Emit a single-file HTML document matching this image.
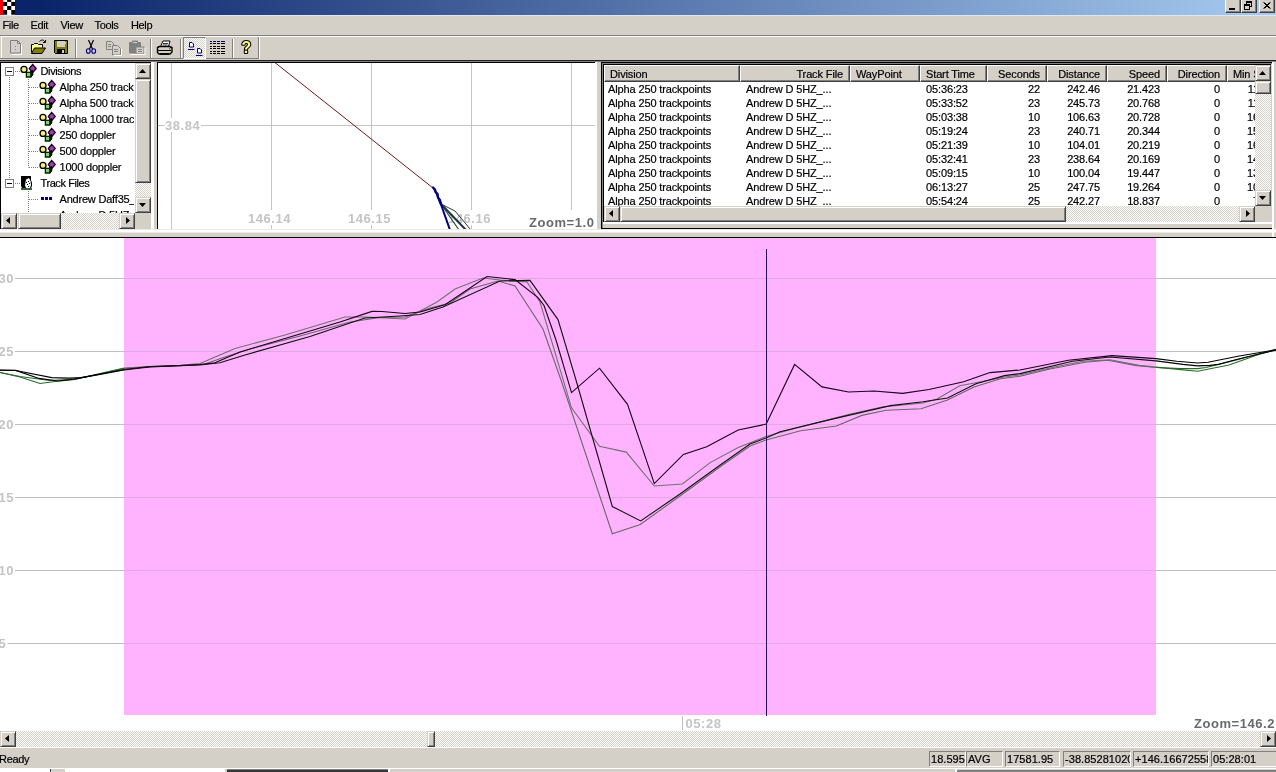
<!DOCTYPE html>
    <html><head><meta charset="utf-8"><title>GPS Results</title>
    <style>
    html,body{margin:0;padding:0;}
    body{width:1276px;height:772px;overflow:hidden;background:#d4d0c8;position:relative;font-family:"Liberation Sans",sans-serif;font-size:11px;color:#000;letter-spacing:-0.13px;line-height:14px;-webkit-text-stroke:0.2px #000;}
    .abs,.abs>*{position:absolute;}
    svg{position:absolute;overflow:hidden;}
    svg text{font-family:"Liberation Sans",sans-serif;}
    #title{left:0;top:0;width:1276px;height:15px;border-bottom:1px solid #e2e6ee;background:linear-gradient(90deg,#0a246a 0%,#0a246a 3%,#a6caf0 100%);}
    .wbtn{top:-2px;width:16px;height:15px;background:#d4d0c8;box-sizing:border-box;border:1px solid;border-color:#fff #404040 #404040 #fff;box-shadow:inset -1px -1px 0 #808080;}
    .scroll{background-color:#e9e7e3;background-image:conic-gradient(#fff 25%,#d4d0c8 0 50%,#fff 0 75%,#d4d0c8 0);background-size:2px 2px;}
    .btn{background:#d4d0c8;box-sizing:border-box;border:1px solid;border-color:#d4d0c8 #404040 #404040 #d4d0c8;box-shadow:inset 1px 1px 0 #fff,inset -1px -1px 0 #808080;}
    .sunk{box-sizing:border-box;border:1px solid;border-color:#808080 #fff #fff #808080;height:16px;top:4px;white-space:nowrap;overflow:hidden;padding:0 0 0 1px;font-size:11px;letter-spacing:0.05px;line-height:14px;}
    .arr{width:0;height:0;border:4px solid transparent;}
    .t{white-space:nowrap;}
    .hd{top:0;height:17px;box-sizing:border-box;background:#d4d0c8;border:1px solid;border-color:#fff #404040 #404040 #fff;box-shadow:inset -1px -1px 0 #808080;white-space:nowrap;overflow:hidden;line-height:13px;}
    .hd span{position:absolute;top:2px;}
    .c{white-space:nowrap;}
    .rr{text-align:right;}
    #w{position:absolute;left:0;top:0;width:1276px;height:772px;overflow:hidden;will-change:transform;}
    </style></head><body><div id="w">
    
<div id="title" class="abs">
<div style="left:0;top:0;width:3px;height:15px;background:#f00000"></div>
<svg style="left:3px;top:0" width="12.400" height="15" viewBox="0 0 12.400 15"><rect width="12.400" height="15" fill="#fff"/>
<rect x="4.13" y="-2.1" width="4.140" height="4" fill="#000"/>
<rect x="0" y="1.9" width="4.140" height="4.1" fill="#000"/>
<rect x="8.26" y="1.9" width="4.140" height="4.1" fill="#000"/>
<rect x="4.13" y="6" width="4.140" height="4" fill="#000"/>
<rect x="0" y="10" width="4.140" height="4.7" fill="#000"/>
<rect x="8.26" y="10" width="4.140" height="4.7" fill="#000"/>
</svg>
<div class="wbtn" style="left:1225px"><div style="position:absolute;left:3px;top:9px;width:6px;height:2px;background:#000"></div></div>
<div class="wbtn" style="left:1241px"><svg style="left:2px;top:2px" width="10" height="10" viewBox="0 0 10 10"><path d="M2 0h6v6h-2v-1h1v-3h-4v1h-1z" fill="#000"/><path d="M0 3h6v6h-6zM1 5v3h4v-3z" fill="#000" fill-rule="evenodd"/></svg></div>
<div class="wbtn" style="left:1259px"><svg style="left:3px;top:3px" width="9" height="8" viewBox="0 0 9 8"><path d="M0.500 0.500l6 6M1.500 0.500l6 6M6.500 0.500l-6 6M7.500 0.500l-6 6" stroke="#000" stroke-width="1" fill="none"/></svg></div>
</div>
<div class="abs" style="left:0;top:16px;width:1276px;height:19px;">
<span class="t" style="left:2.5px;top:2px;letter-spacing:-0.350px">File</span>
<span class="t" style="left:30.5px;top:2px;letter-spacing:-0.350px">Edit</span>
<span class="t" style="left:60.5px;top:2px;letter-spacing:-0.350px">View</span>
<span class="t" style="left:94.5px;top:2px;letter-spacing:-0.350px">Tools</span>
<span class="t" style="left:131px;top:2px;letter-spacing:-0.350px">Help</span>
</div>
<div class="abs" style="left:0;top:35px;width:1276px;height:1px;background:#808080"></div>
<div class="abs" style="left:0;top:36px;width:1276px;height:1px;background:#fff"></div>
<div id="toolbar" class="abs" style="left:0;top:37px;width:1276px;height:23px;">
<div style="left:1px;top:0;width:1px;height:22px;background:#fff"></div>
<div style="left:75px;top:2px;width:1px;height:19px;background:#808080"></div><div style="left:76px;top:2px;width:1px;height:19px;background:#fff"></div>
<div style="left:150px;top:2px;width:1px;height:19px;background:#808080"></div><div style="left:151px;top:2px;width:1px;height:19px;background:#fff"></div>
<div style="left:180px;top:2px;width:1px;height:19px;background:#808080"></div><div style="left:181px;top:2px;width:1px;height:19px;background:#fff"></div>
<div style="left:232px;top:2px;width:1px;height:19px;background:#808080"></div><div style="left:233px;top:2px;width:1px;height:19px;background:#fff"></div>
<div style="left:258px;top:0;width:1px;height:22px;background:#808080"></div><div style="left:259px;top:0;width:1px;height:22px;background:#fff"></div>
<div style="left:0;top:21px;width:259px;height:1px;background:#808080"></div>
<div class="scroll" style="left:183px;top:0px;width:23px;height:22px;box-sizing:border-box;border:1px solid;border-color:#808080 #fff #fff #808080"></div>
<svg style="left:0;top:0" width="260" height="23" viewBox="0 37 260 23">
<path d="M10.5 40.5h7l3 3v9.5h-10z" fill="#d4d0c8" stroke="#808080"/><path d="M17.5 40.5v3h3" fill="none" stroke="#808080"/><path d="M11.5 54.5h10v-10" fill="none" stroke="#fff"/><rect x="15" y="46" width="1" height="1" fill="#808080"/><rect x="15" y="49" width="1" height="1" fill="#808080"/>
<path d="M31.5 52.5v-8h2l1-1h3l1 1h4v3" fill="#ffff99" stroke="#000"/><path d="M31.5 53.5l3-5.5h11l-3.5 5.5z" fill="#808000" stroke="#000"/><path d="M39.5 41.5c2-2 4-2 5.500 0.500m0.500-2v2.500h-2.500" fill="none" stroke="#000"/>
<path d="M54.500 40.500h13v13h-12l-1-1z" fill="#808000" stroke="#000"/><rect x="57" y="41" width="8" height="6" fill="#d4d0c8"/><rect x="57" y="49" width="8" height="4" fill="#000"/><rect x="62" y="50" width="2" height="3" fill="#d4d0c8"/><rect x="65" y="42" width="1" height="2" fill="#d4d0c8"/>
<path d="M88.500 40L92.500 49M93.500 40L89.500 49" stroke="#000" fill="none" stroke-width="1.200"/><ellipse cx="88.300" cy="51" rx="1.900" ry="2.300" fill="none" stroke="#000080" stroke-width="1.100"/><ellipse cx="93.700" cy="51" rx="1.900" ry="2.300" fill="none" stroke="#000080" stroke-width="1.100"/>
<path d="M106.500 41.500h5l2 2v6h-7z" fill="#d4d0c8" stroke="#808080"/><path d="M112.500 45.500h5l3 3v6.500h-8z" fill="#d4d0c8" stroke="#808080"/><path d="M108 44.500h3M108 46.500h3M114 49.500h4M114 51.500h4" stroke="#808080"/><path d="M113.500 55.500h8v-7" stroke="#fff" fill="none"/>
<path d="M129.500 42.500h3v-1.500h5v1.500h3v10.500h-11z" fill="#808080" stroke="#808080"/><rect x="136" y="47" width="8" height="7" fill="#d4d0c8" stroke="#808080"/><path d="M138 49.500h4M138 51.500h4" stroke="#808080"/><rect x="133" y="42" width="4" height="1" fill="#d4d0c8"/><path d="M130.500 54.500h14.500v-7" stroke="#fff" fill="none"/>
<path d="M160.500 46.500l2.500-5.500h7l-1.500 5.500" fill="#fff" stroke="#000"/><path d="M163 43.500h5M162.500 45h5" stroke="#000" stroke-width="0.800"/><path d="M157.500 47.500l2-1h10l2.500 1v4.500l-2 2h-11l-1.500-1.500z" fill="#d4d0c8" stroke="#000" stroke-width="1.400"/><path d="M158 50.500h13" stroke="#000"/><path d="M160 54h9" stroke="#000" stroke-width="1.600"/><rect x="169" y="48" width="1.500" height="1.500" fill="#808000"/>
<path d="M189.500 42.500h2.500l1.500 1.500v3h-4z" fill="#fff" stroke="#000080"/><path d="M188 49.500h6.500" stroke="#000080"/><path d="M197.500 48.500h2.500l1.500 1.500v3h-4z" fill="#fff" stroke="#000080"/><path d="M196 55.500h6.500" stroke="#000080"/>
<path d="M210 41.5h2M213 41.5h3M217 41.5h3M221 41.5h4" stroke="#000080"/>
<path d="M210 43.5h2M213 43.5h3M217 43.5h3M221 43.5h4" stroke="#000"/>
<path d="M210 46.5h2M213 46.5h3M217 46.5h3M221 46.5h4" stroke="#000"/>
<path d="M210 48.5h2M213 48.5h3M217 48.5h3M221 48.5h4" stroke="#000"/>
<path d="M210 51.5h2M213 51.5h3M217 51.5h3M221 51.5h4" stroke="#000"/>
<path d="M210 53.5h2M213 53.5h3M217 53.5h3M221 53.5h4" stroke="#000"/>
<text x="241.500" y="52.500" font-size="16" font-weight="bold" fill="#000" stroke="#000" stroke-width="2.200" stroke-linejoin="round" textLength="9.500" lengthAdjust="spacingAndGlyphs">?</text><text x="241.500" y="52.500" font-size="16" font-weight="bold" fill="#ffff80" textLength="9.500" lengthAdjust="spacingAndGlyphs">?</text>
</svg></div>
<div class="abs" style="left:0;top:60px;width:1276px;height:1px;background:#202020"></div>
<div class="abs" style="left:0;top:61px;width:1276px;height:1px;background:#808080"></div>
<div id="tree" class="abs" style="left:0;top:62px;width:151px;height:167px;background:#fff;box-sizing:border-box;border:0 solid #000;border-width:1px 0 0 1px;overflow:hidden">
<svg style="left:-1px;top:-63px" width="136" height="276" viewBox="0 0 136 276">
<g stroke="#808080" stroke-width="1" stroke-dasharray="1 1" fill="none">
<path d="M9.500 77v102"/><path d="M15 71.500h6"/><path d="M15 183.500h6"/>
<path d="M28.500 79v88.500"/><path d="M28.500 191v22"/>
<path d="M29 87.5h10"/>
<path d="M29 103.5h10"/>
<path d="M29 119.5h10"/>
<path d="M29 135.5h10"/>
<path d="M29 151.5h10"/>
<path d="M29 167.5h10"/>
<path d="M29 199.500h10"/>
</g>
<rect x="5.500" y="67.5" width="8" height="8" fill="#fff" stroke="#808080"/><path d="M7 71.5h5" stroke="#000"/>
<rect x="5.500" y="179.5" width="8" height="8" fill="#fff" stroke="#808080"/><path d="M7 183.5h5" stroke="#000"/>
<path d="M26 71.5l2 2M31.5 71l-1.500 2" stroke="#000" stroke-width="1.600"/><circle cx="24" cy="69.4" r="3" fill="#f4ec7c" stroke="#000" stroke-width="1.300"/><path d="M32.7 64.3l3.500 4.200l-3.500 4.100l-3.400-4.100z" fill="#a23cb0" stroke="#1a001a" stroke-width="1.300" stroke-linejoin="round"/><path d="M30.9 72l1.900-1.500v4.500l-1.900 2z" fill="#000" stroke="#000" stroke-width="1"/><path d="M26.4 72.4h4.400v4.600h-4.400z" fill="#7cdc5c" stroke="#002000" stroke-width="1.300"/>
<path d="M45 87.5l2 2M50.5 87l-1.500 2" stroke="#000" stroke-width="1.600"/><circle cx="43" cy="85.4" r="3" fill="#f4ec7c" stroke="#000" stroke-width="1.300"/><path d="M51.7 80.3l3.500 4.200l-3.500 4.100l-3.400-4.100z" fill="#a23cb0" stroke="#1a001a" stroke-width="1.300" stroke-linejoin="round"/><path d="M49.9 88l1.900-1.500v4.500l-1.900 2z" fill="#000" stroke="#000" stroke-width="1"/><path d="M45.4 88.4h4.400v4.600h-4.400z" fill="#7cdc5c" stroke="#002000" stroke-width="1.300"/>
<path d="M45 103.5l2 2M50.5 103l-1.500 2" stroke="#000" stroke-width="1.600"/><circle cx="43" cy="101.4" r="3" fill="#f4ec7c" stroke="#000" stroke-width="1.300"/><path d="M51.7 96.3l3.500 4.200l-3.500 4.100l-3.400-4.100z" fill="#a23cb0" stroke="#1a001a" stroke-width="1.300" stroke-linejoin="round"/><path d="M49.9 104l1.900-1.500v4.500l-1.900 2z" fill="#000" stroke="#000" stroke-width="1"/><path d="M45.4 104.4h4.400v4.600h-4.400z" fill="#7cdc5c" stroke="#002000" stroke-width="1.300"/>
<path d="M45 119.5l2 2M50.5 119l-1.500 2" stroke="#000" stroke-width="1.600"/><circle cx="43" cy="117.4" r="3" fill="#f4ec7c" stroke="#000" stroke-width="1.300"/><path d="M51.7 112.3l3.500 4.200l-3.500 4.100l-3.400-4.100z" fill="#a23cb0" stroke="#1a001a" stroke-width="1.300" stroke-linejoin="round"/><path d="M49.9 120l1.900-1.500v4.500l-1.900 2z" fill="#000" stroke="#000" stroke-width="1"/><path d="M45.4 120.4h4.400v4.600h-4.400z" fill="#7cdc5c" stroke="#002000" stroke-width="1.300"/>
<path d="M45 135.5l2 2M50.5 135l-1.500 2" stroke="#000" stroke-width="1.600"/><circle cx="43" cy="133.4" r="3" fill="#f4ec7c" stroke="#000" stroke-width="1.300"/><path d="M51.7 128.3l3.500 4.200l-3.500 4.100l-3.400-4.100z" fill="#a23cb0" stroke="#1a001a" stroke-width="1.300" stroke-linejoin="round"/><path d="M49.9 136l1.900-1.500v4.500l-1.900 2z" fill="#000" stroke="#000" stroke-width="1"/><path d="M45.4 136.4h4.400v4.600h-4.400z" fill="#7cdc5c" stroke="#002000" stroke-width="1.300"/>
<path d="M45 151.5l2 2M50.5 151l-1.500 2" stroke="#000" stroke-width="1.600"/><circle cx="43" cy="149.4" r="3" fill="#f4ec7c" stroke="#000" stroke-width="1.300"/><path d="M51.7 144.3l3.500 4.200l-3.500 4.100l-3.400-4.100z" fill="#a23cb0" stroke="#1a001a" stroke-width="1.300" stroke-linejoin="round"/><path d="M49.9 152l1.900-1.500v4.500l-1.900 2z" fill="#000" stroke="#000" stroke-width="1"/><path d="M45.4 152.4h4.400v4.600h-4.400z" fill="#7cdc5c" stroke="#002000" stroke-width="1.300"/>
<path d="M45 167.5l2 2M50.5 167l-1.500 2" stroke="#000" stroke-width="1.600"/><circle cx="43" cy="165.4" r="3" fill="#f4ec7c" stroke="#000" stroke-width="1.300"/><path d="M51.7 160.3l3.500 4.200l-3.500 4.100l-3.400-4.100z" fill="#a23cb0" stroke="#1a001a" stroke-width="1.300" stroke-linejoin="round"/><path d="M49.9 168l1.900-1.500v4.500l-1.900 2z" fill="#000" stroke="#000" stroke-width="1"/><path d="M45.4 168.4h4.400v4.600h-4.400z" fill="#7cdc5c" stroke="#002000" stroke-width="1.300"/>
<path d="M21 176H31V180L32 183V186L31 188H22L21 186Z" fill="#000"/><path d="M26 179.500L29 178L30.500 181L31 185L30 188H26L25 185Z" fill="#fff"/><path d="M28 181h1v1h-1zM29 183h1v1h-1zM27 184h1v1h-1zM28 186h1v1h-1zM26 182h1v1h-1z" fill="#000"/><path d="M21 189H32" stroke="#0a3a0a" stroke-width="1.600"/>
<rect x="41" y="197" width="3" height="3" fill="#000080"/>
<rect x="45" y="197" width="3" height="3" fill="#000080"/>
<rect x="49" y="197" width="3" height="3" fill="#000080"/>
</svg>
<div class="abs" style="left:0;top:0;width:133px;height:150px;overflow:hidden;font-size:11px;letter-spacing:-0.050px">
<span class="t" style="left:39.5px;top:1px;letter-spacing:-0.38px">Divisions</span>
<span class="t" style="left:58.5px;top:17px;letter-spacing:-0.15px">Alpha 250 trackpoints</span>
<span class="t" style="left:58.5px;top:33px;letter-spacing:-0.15px">Alpha 500 trackpoints</span>
<span class="t" style="left:58.5px;top:49px;letter-spacing:-0.15px">Alpha 1000 trackpoints</span>
<span class="t" style="left:58.5px;top:65px;letter-spacing:-0.2px">250 doppler</span>
<span class="t" style="left:58.5px;top:81px;letter-spacing:-0.2px">500 doppler</span>
<span class="t" style="left:58.5px;top:97px;letter-spacing:-0.2px">1000 doppler</span>
<span class="t" style="left:39.5px;top:113px;letter-spacing:-0.41px">Track Files</span>
<span class="t" style="left:58.5px;top:129px;letter-spacing:-0.2px">Andrew Daff35_</span>
<span class="t" style="left:58.5px;top:145px;letter-spacing:-0.2px">Andrew D 5HZ_</span>
</div>
<div class="scroll" style="left:134px;top:0;width:16px;height:150px"></div>
<div class="btn" style="left:134px;top:0;width:16px;height:16px"></div><svg style="left:138px;top:6px" width="7" height="4"><path d="M0 4L3.500 0L7 4z" fill="#000"/></svg>
<div class="btn" style="left:134px;top:16px;width:16px;height:104px"></div>
<div class="btn" style="left:134px;top:134px;width:16px;height:16px"></div><svg style="left:138px;top:140px" width="7" height="4"><path d="M0 0L3.500 4L7 0z" fill="#000"/></svg>
<div class="scroll" style="left:0;top:150px;width:134px;height:16px"></div>
<div class="btn" style="left:0;top:150px;width:16px;height:16px"></div><svg style="left:5px;top:154px" width="4" height="7"><path d="M4 0L0 3.500L4 7z" fill="#000"/></svg>
<div class="btn" style="left:17px;top:150px;width:43px;height:16px"></div>
<div class="btn" style="left:118px;top:150px;width:16px;height:16px"></div><svg style="left:125px;top:154px" width="4" height="7"><path d="M0 0L4 3.500L0 7z" fill="#000"/></svg>
<div style="left:134px;top:150px;width:16px;height:16px;background:#d4d0c8"></div>
</div>
<div class="abs" style="left:151px;top:62px;width:3px;height:168px;background:#fff"></div>
<div id="map" class="abs" style="left:157px;top:62px;width:438px;height:167px;background:#fff;box-sizing:border-box;border:0 solid #000;border-width:1px 0 0 1px;overflow:hidden">
<svg style="left:-1px;top:-1px" width="438" height="167" viewBox="157 62 438 167">
<g stroke="#c4c4c4" stroke-width="1" fill="none">
<path d="M171.5 60V230"/>
<path d="M271.5 60V230"/>
<path d="M371.5 60V230"/>
<path d="M471.5 60V230"/>
<path d="M571.5 60V230"/>
<path d="M156 125.500H597"/>
</g>
<g fill="#fff"><rect x="165" y="118" width="36" height="14"/>
<rect x="247.5" y="210" width="46" height="15"/>
<rect x="347.5" y="210" width="46" height="15"/>
<rect x="447.5" y="210" width="46" height="15"/>
<rect x="528" y="210" width="68" height="20"/>
</g>
<g font-weight="bold" font-size="13" fill="#c4c4c4" letter-spacing="0.550">
<text x="165" y="130">38.84</text>
<text x="248.0" y="223">146.14</text>
<text x="348.0" y="223">146.15</text>
<text x="448.0" y="223">146.16</text>
</g>
<path d="M273 61L433 188" stroke="#701818" stroke-width="1" fill="none"/>
<path d="M441 204L455 211L471 230" stroke="#304030" stroke-width="1" fill="none"/>
<path d="M441 204L459 230" stroke="#2a5a3a" stroke-width="1.200" fill="none"/>
<path d="M441 204L466 230" stroke="#203040" stroke-width="2" fill="none"/>
<path d="M433.500 188L436.500 193L439 200L441 204.500L450 230" stroke="#000080" stroke-width="2" fill="none" stroke-linejoin="round"/>
<path d="M433 187.500L435 189.500L435.500 192L437.500 194L438 197.500L440 200L441 204" stroke="#000080" stroke-width="2.300" fill="none" stroke-linecap="round"/>
<text x="529" y="227" fill="#6a6a6a" font-weight="bold" font-size="13" letter-spacing="0.550">Zoom=1.0</text>
</svg></div>
<div class="abs" style="left:595px;top:62px;width:2px;height:168px;background:#fff"></div>
<div id="list" class="abs" style="left:601px;top:62px;width:673px;height:167px;background:#d4d0c8;overflow:hidden">
<div style="left:0;top:0;width:671px;height:1px;background:#000"></div><div style="left:0;top:0;width:1px;height:167px;background:#000"></div><div style="left:0;top:166px;width:671px;height:1px;background:#000"></div>
<div style="left:1px;top:1px;width:670px;height:1px;background:#808080"></div><div style="left:1px;top:1px;width:1px;height:165px;background:#808080"></div>
<div style="left:671px;top:0;width:2px;height:167px;background:#fff"></div>
<div style="left:2px;top:160px;width:671px;height:2px;background:#fff"></div>
<div style="left:2px;top:2px;width:668px;height:158px;background:#fff;box-sizing:border-box;border:0 solid #000;border-width:1px 0 0 1px;overflow:hidden" class="abs">
<div style="left:0;top:0;width:651px;height:17px;overflow:hidden" class="abs">
<div class="hd" style="left:0px;width:136px"><span style="left:5px">Division</span></div>
<div class="hd" style="left:136px;width:110px"><span style="right:6px">Track File</span></div>
<div class="hd" style="left:246px;width:70px"><span style="left:5px">WayPoint</span></div>
<div class="hd" style="left:316px;width:67px"><span style="left:5px">Start Time</span></div>
<div class="hd" style="left:383px;width:60px"><span style="right:6px">Seconds</span></div>
<div class="hd" style="left:443px;width:60px"><span style="right:6px">Distance</span></div>
<div class="hd" style="left:503px;width:60px"><span style="right:6px">Speed</span></div>
<div class="hd" style="left:563px;width:60px"><span style="right:6px">Direction</span></div>
<div class="hd" style="left:623px;width:63px"><span style="left:5px">Min Spd</span></div>
</div>
<div style="left:0;top:17px;width:651px;height:124px;overflow:hidden" class="abs">
<span class="c" style="left:4px;top:0px">Alpha 250 trackpoints</span>
<span class="c" style="left:142px;top:0px">Andrew D 5HZ_...</span>
<span class="c" style="left:322px;top:0px">05:36:23</span>
<span class="c rr" style="left:383px;width:53px;top:0px">22</span>
<span class="c rr" style="left:443px;width:53px;top:0px">242.46</span>
<span class="c rr" style="left:503px;width:53px;top:0px">21.423</span>
<span class="c rr" style="left:563px;width:53px;top:0px">0</span>
<span class="c rr" style="left:623px;width:32px;top:0px">11</span>
<span class="c" style="left:4px;top:14px">Alpha 250 trackpoints</span>
<span class="c" style="left:142px;top:14px">Andrew D 5HZ_...</span>
<span class="c" style="left:322px;top:14px">05:33:52</span>
<span class="c rr" style="left:383px;width:53px;top:14px">23</span>
<span class="c rr" style="left:443px;width:53px;top:14px">245.73</span>
<span class="c rr" style="left:503px;width:53px;top:14px">20.768</span>
<span class="c rr" style="left:563px;width:53px;top:14px">0</span>
<span class="c rr" style="left:623px;width:32px;top:14px">11</span>
<span class="c" style="left:4px;top:28px">Alpha 250 trackpoints</span>
<span class="c" style="left:142px;top:28px">Andrew D 5HZ_...</span>
<span class="c" style="left:322px;top:28px">05:03:38</span>
<span class="c rr" style="left:383px;width:53px;top:28px">10</span>
<span class="c rr" style="left:443px;width:53px;top:28px">106.63</span>
<span class="c rr" style="left:503px;width:53px;top:28px">20.728</span>
<span class="c rr" style="left:563px;width:53px;top:28px">0</span>
<span class="c rr" style="left:623px;width:32px;top:28px">16</span>
<span class="c" style="left:4px;top:42px">Alpha 250 trackpoints</span>
<span class="c" style="left:142px;top:42px">Andrew D 5HZ_...</span>
<span class="c" style="left:322px;top:42px">05:19:24</span>
<span class="c rr" style="left:383px;width:53px;top:42px">23</span>
<span class="c rr" style="left:443px;width:53px;top:42px">240.71</span>
<span class="c rr" style="left:503px;width:53px;top:42px">20.344</span>
<span class="c rr" style="left:563px;width:53px;top:42px">0</span>
<span class="c rr" style="left:623px;width:32px;top:42px">15</span>
<span class="c" style="left:4px;top:56px">Alpha 250 trackpoints</span>
<span class="c" style="left:142px;top:56px">Andrew D 5HZ_...</span>
<span class="c" style="left:322px;top:56px">05:21:39</span>
<span class="c rr" style="left:383px;width:53px;top:56px">10</span>
<span class="c rr" style="left:443px;width:53px;top:56px">104.01</span>
<span class="c rr" style="left:503px;width:53px;top:56px">20.219</span>
<span class="c rr" style="left:563px;width:53px;top:56px">0</span>
<span class="c rr" style="left:623px;width:32px;top:56px">16</span>
<span class="c" style="left:4px;top:70px">Alpha 250 trackpoints</span>
<span class="c" style="left:142px;top:70px">Andrew D 5HZ_...</span>
<span class="c" style="left:322px;top:70px">05:32:41</span>
<span class="c rr" style="left:383px;width:53px;top:70px">23</span>
<span class="c rr" style="left:443px;width:53px;top:70px">238.64</span>
<span class="c rr" style="left:503px;width:53px;top:70px">20.169</span>
<span class="c rr" style="left:563px;width:53px;top:70px">0</span>
<span class="c rr" style="left:623px;width:32px;top:70px">14</span>
<span class="c" style="left:4px;top:84px">Alpha 250 trackpoints</span>
<span class="c" style="left:142px;top:84px">Andrew D 5HZ_...</span>
<span class="c" style="left:322px;top:84px">05:09:15</span>
<span class="c rr" style="left:383px;width:53px;top:84px">10</span>
<span class="c rr" style="left:443px;width:53px;top:84px">100.04</span>
<span class="c rr" style="left:503px;width:53px;top:84px">19.447</span>
<span class="c rr" style="left:563px;width:53px;top:84px">0</span>
<span class="c rr" style="left:623px;width:32px;top:84px">13</span>
<span class="c" style="left:4px;top:98px">Alpha 250 trackpoints</span>
<span class="c" style="left:142px;top:98px">Andrew D 5HZ_...</span>
<span class="c" style="left:322px;top:98px">06:13:27</span>
<span class="c rr" style="left:383px;width:53px;top:98px">25</span>
<span class="c rr" style="left:443px;width:53px;top:98px">247.75</span>
<span class="c rr" style="left:503px;width:53px;top:98px">19.264</span>
<span class="c rr" style="left:563px;width:53px;top:98px">0</span>
<span class="c rr" style="left:623px;width:32px;top:98px">10</span>
<span class="c" style="left:4px;top:112px">Alpha 250 trackpoints</span>
<span class="c" style="left:142px;top:112px">Andrew D 5HZ_...</span>
<span class="c" style="left:322px;top:112px">05:54:24</span>
<span class="c rr" style="left:383px;width:53px;top:112px">25</span>
<span class="c rr" style="left:443px;width:53px;top:112px">242.27</span>
<span class="c rr" style="left:503px;width:53px;top:112px">18.837</span>
<span class="c rr" style="left:563px;width:53px;top:112px">0</span>
<span class="c rr" style="left:623px;width:32px;top:112px">7</span>
</div>
<div class="scroll" style="left:651px;top:0;width:16px;height:141px"></div>
<div class="btn" style="left:651px;top:0;width:16px;height:16px"></div><svg style="left:655px;top:6px" width="7" height="4"><path d="M0 4L3.500 0L7 4z" fill="#000"/></svg>
<div class="btn" style="left:651px;top:16px;width:16px;height:13px"></div>
<div class="btn" style="left:651px;top:125px;width:16px;height:16px"></div><svg style="left:655px;top:131px" width="7" height="4"><path d="M0 0L3.500 4L7 0z" fill="#000"/></svg>
<div class="scroll" style="left:0;top:141px;width:651px;height:16px"></div>
<div class="btn" style="left:0;top:141px;width:16px;height:16px"></div><svg style="left:5px;top:145px" width="4" height="7"><path d="M4 0L0 3.500L4 7z" fill="#000"/></svg>
<div class="btn" style="left:16px;top:141px;width:446px;height:16px"></div>
<div class="btn" style="left:635px;top:141px;width:16px;height:16px"></div><svg style="left:642px;top:145px" width="4" height="7"><path d="M0 0L4 3.500L0 7z" fill="#000"/></svg>
<div style="left:651px;top:141px;width:16px;height:16px;background:#d4d0c8"></div>
</div>
</div>
<div class="abs" style="left:0;top:229px;width:1276px;height:1px;background:#eceae5"></div>
<div class="abs" style="left:0;top:230px;width:1276px;height:2px;background:#fff"></div>
<div class="abs" style="left:0;top:232px;width:1276px;height:1px;background:#eceae5"></div>
<div class="abs" style="left:1272px;top:229px;width:2px;height:8px;background:#fff"></div>
<div id="chart" class="abs" style="left:0;top:237px;width:1276px;height:494px;background:#fff;overflow:hidden">
<svg style="left:0;top:0" width="1276" height="494" viewBox="0 237 1276 494">
<rect x="0" y="237" width="1276" height="1" fill="#000"/>
<rect x="124" y="238" width="1032" height="477" fill="#ffb3ff"/>
<g stroke="#c0c0c0" stroke-width="1">
<path d="M0 278.5H124M1156 278.5H1276"/>
<path d="M0 351.5H124M1156 351.5H1276"/>
<path d="M0 424.5H124M1156 424.5H1276"/>
<path d="M0 497.5H124M1156 497.5H1276"/>
<path d="M0 570.5H124M1156 570.5H1276"/>
<path d="M0 643.5H124M1156 643.5H1276"/>
</g><g stroke="#e0a8e0" stroke-width="1">
<path d="M124 278.5H1156"/>
<path d="M124 351.5H1156"/>
<path d="M124 424.5H1156"/>
<path d="M124 497.5H1156"/>
<path d="M124 570.5H1156"/>
<path d="M124 643.5H1156"/>
</g>
<g fill="#fff">
<rect x="0" y="272" width="15" height="13"/>
<rect x="0" y="345" width="15" height="13"/>
<rect x="0" y="418" width="15" height="13"/>
<rect x="0" y="491" width="15" height="13"/>
<rect x="0" y="564" width="15" height="13"/>
<rect x="0" y="637" width="7.5" height="13"/>
<rect x="683" y="716" width="40" height="14"/>
</g>
<g font-weight="bold" font-size="13" fill="#c4c4c4" letter-spacing="0.550">
<text x="-1.5" y="283">30</text>
<text x="-1.5" y="356">25</text>
<text x="-1.5" y="429">20</text>
<text x="-1.5" y="502">15</text>
<text x="-1.5" y="575">10</text>
<text x="-1.5" y="648">5</text>
<path d="M682.500 716V730" stroke="#c0c0c0"/>
<text x="685.500" y="728">05:28</text>
<text x="1194" y="728" fill="#6a6a6a">Zoom=146.2</text>
</g>
<defs><clipPath id="cpink"><rect x="124" y="238" width="1032" height="477"/></clipPath><clipPath id="cwl"><rect x="0" y="238" width="124" height="477"/></clipPath><clipPath id="cwr"><rect x="1156" y="238" width="120" height="477"/></clipPath></defs>
<polyline points="0,372.5 20,377 40,383.5 55,381.5 75,379.5 100,373.5 124,368 150,366.5 180,365.4 200,363.5 235,348.4 285,335 345,317 365,317 405,319 437,302 455,289 483,278 500,280 527,282 540,302 571.5,407.8 599.5,446.3 626.3,452.1 654.3,486 682.3,484 710.2,462.6 738.2,447.5 766,436.5 800,427 849.6,414.4 882,407 923,403 937,399 959.7,385.8 976,382.8 1004.5,377 1020,375 1050,368 1083,361.3 1110,359.8 1139,365.4 1181,369.6 1197.6,371.3 1229,365 1260,354 1276,349.8" fill="none" stroke="#707070" stroke-width="1.100" clip-path="url(#cpink)"/>
<polyline points="0,372.5 20,377 40,383.5 55,381.5 75,379.5 100,373.5 124,368 150,366.5 180,365.4 200,363.5 235,348.4 285,335 345,317 365,317 405,319 437,302 455,289 483,278 500,280 527,282 540,302 571.5,407.8 599.5,446.3 626.3,452.1 654.3,486 682.3,484 710.2,462.6 738.2,447.5 766,436.5 800,427 849.6,414.4 882,407 923,403 937,399 959.7,385.8 976,382.8 1004.5,377 1020,375 1050,368 1083,361.3 1110,359.8 1139,365.4 1181,369.6 1197.6,371.3 1229,365 1260,354 1276,349.8" fill="none" stroke="#2a6a2a" stroke-width="1.100" clip-path="url(#cwl)"/>
<polyline points="0,372.5 20,377 40,383.5 55,381.5 75,379.5 100,373.5 124,368 150,366.5 180,365.4 200,363.5 235,348.4 285,335 345,317 365,317 405,319 437,302 455,289 483,278 500,280 527,282 540,302 571.5,407.8 599.5,446.3 626.3,452.1 654.3,486 682.3,484 710.2,462.6 738.2,447.5 766,436.5 800,427 849.6,414.4 882,407 923,403 937,399 959.7,385.8 976,382.8 1004.5,377 1020,375 1050,368 1083,361.3 1110,359.8 1139,365.4 1181,369.6 1197.6,371.3 1229,365 1260,354 1276,349.8" fill="none" stroke="#2a6a2a" stroke-width="1.100" clip-path="url(#cwr)"/>
<polyline points="0,372.5 20,376.5 50,380.5 75,379 100,374 124,368.5 150,366.8 180,365.6 205,364 225,357 250,349 300,336 350,322 380,317.5 405,317 430,308 450,303 470,289 498,281 515,286 543,329 561,380 612.3,533.7 640.3,524.4 680,496 722,465.5 750,446 766,440 800.7,430.7 836.4,426 861.9,415.4 886.3,410.3 921,408.7 947.5,400 974,386.9 1000.4,378.7 1020,376.3 1050,369 1085,362.3 1108,360.2 1135,365.4 1156,367.5 1181,368.6 1197.6,368.6 1206,367.5 1239.3,359.2 1276,349.2" fill="none" stroke="#686868" stroke-width="1.100" clip-path="url(#cpink)"/>
<polyline points="0,372.5 20,376.5 50,380.5 75,379 100,374 124,368.5 150,366.8 180,365.6 205,364 225,357 250,349 300,336 350,322 380,317.5 405,317 430,308 450,303 470,289 498,281 515,286 543,329 561,380 612.3,533.7 640.3,524.4 680,496 722,465.5 750,446 766,440 800.7,430.7 836.4,426 861.9,415.4 886.3,410.3 921,408.7 947.5,400 974,386.9 1000.4,378.7 1020,376.3 1050,369 1085,362.3 1108,360.2 1135,365.4 1156,367.5 1181,368.6 1197.6,368.6 1206,367.5 1239.3,359.2 1276,349.2" fill="none" stroke="#2a6a2a" stroke-width="1.100" clip-path="url(#cwl)"/>
<polyline points="0,372.5 20,376.5 50,380.5 75,379 100,374 124,368.5 150,366.8 180,365.6 205,364 225,357 250,349 300,336 350,322 380,317.5 405,317 430,308 450,303 470,289 498,281 515,286 543,329 561,380 612.3,533.7 640.3,524.4 680,496 722,465.5 750,446 766,440 800.7,430.7 836.4,426 861.9,415.4 886.3,410.3 921,408.7 947.5,400 974,386.9 1000.4,378.7 1020,376.3 1050,369 1085,362.3 1108,360.2 1135,365.4 1156,367.5 1181,368.6 1197.6,368.6 1206,367.5 1239.3,359.2 1276,349.2" fill="none" stroke="#2a6a2a" stroke-width="1.100" clip-path="url(#cwr)"/>
<polyline points="0,370.2 15.7,370.5 51.7,377.6 69,378.1 81.5,377.6 100,374.5 124,370 150,367 180,365.8 200,365 220,362.7 245,355 310,336.5 350,323 365,318 400,316 420,314.5 443,307 500,281 530,280.4 558,319.6 576,380 612.3,506.5 640.7,520.9 680,494 722,463.8 750,444 766,438 780,431.7 835.4,418.4 890.4,405.6 923,401.7 947.5,398 976,383.8 1004.5,375.6 1020,373.6 1072.5,361.3 1110,357 1156,360.9 1183,364.4 1197.6,365.9 1210,365.4 1218.5,364.4 1239.3,358.8 1276,350" fill="none" stroke="#101010" stroke-width="1.100" clip-path="url(#cpink)"/>
<polyline points="0,370.2 15.7,370.5 51.7,377.6 69,378.1 81.5,377.6 100,374.5 124,370 150,367 180,365.8 200,365 220,362.7 245,355 310,336.5 350,323 365,318 400,316 420,314.5 443,307 500,281 530,280.4 558,319.6 576,380 612.3,506.5 640.7,520.9 680,494 722,463.8 750,444 766,438 780,431.7 835.4,418.4 890.4,405.6 923,401.7 947.5,398 976,383.8 1004.5,375.6 1020,373.6 1072.5,361.3 1110,357 1156,360.9 1183,364.4 1197.6,365.9 1210,365.4 1218.5,364.4 1239.3,358.8 1276,350" fill="none" stroke="#000" stroke-width="1.100" clip-path="url(#cwl)"/>
<polyline points="0,370.2 15.7,370.5 51.7,377.6 69,378.1 81.5,377.6 100,374.5 124,370 150,367 180,365.8 200,365 220,362.7 245,355 310,336.5 350,323 365,318 400,316 420,314.5 443,307 500,281 530,280.4 558,319.6 576,380 612.3,506.5 640.7,520.9 680,494 722,463.8 750,444 766,438 780,431.7 835.4,418.4 890.4,405.6 923,401.7 947.5,398 976,383.8 1004.5,375.6 1020,373.6 1072.5,361.3 1110,357 1156,360.9 1183,364.4 1197.6,365.9 1210,365.4 1218.5,364.4 1239.3,358.8 1276,350" fill="none" stroke="#000" stroke-width="1.100" clip-path="url(#cwr)"/>
<polyline points="0,370 15.7,370.4 39,378.4 58,381 73.7,379.2 81.5,377.6 100,374 124,369.5 150,366.5 180,365.5 200,364.5 215,362.7 240,352 270,343 300,334 340,322 372,311.4 382,311.5 405,313.5 420,312 445,304.7 487,276.5 515,279.6 538,297.6 544,305.5 556,340 571.5,392.6 599.5,368.2 627.5,404.3 654.3,483.6 683.4,454.4 706.7,446.8 738.2,430 766.2,424.1 794.6,364.4 822,386.9 848.6,392 874,391 902.6,393.4 929,389.5 963.7,381.8 990,372.6 1020,370 1068.4,360.2 1112,355.6 1156,358.6 1176.8,361.3 1197.6,363 1208,362.3 1239.3,356 1276,349.8" fill="none" stroke="#180018" stroke-width="1.100" clip-path="url(#cpink)"/>
<polyline points="0,370 15.7,370.4 39,378.4 58,381 73.7,379.2 81.5,377.6 100,374 124,369.5 150,366.5 180,365.5 200,364.5 215,362.7 240,352 270,343 300,334 340,322 372,311.4 382,311.5 405,313.5 420,312 445,304.7 487,276.5 515,279.6 538,297.6 544,305.5 556,340 571.5,392.6 599.5,368.2 627.5,404.3 654.3,483.6 683.4,454.4 706.7,446.8 738.2,430 766.2,424.1 794.6,364.4 822,386.9 848.6,392 874,391 902.6,393.4 929,389.5 963.7,381.8 990,372.6 1020,370 1068.4,360.2 1112,355.6 1156,358.6 1176.8,361.3 1197.6,363 1208,362.3 1239.3,356 1276,349.8" fill="none" stroke="#000" stroke-width="1.100" clip-path="url(#cwl)"/>
<polyline points="0,370 15.7,370.4 39,378.4 58,381 73.7,379.2 81.5,377.6 100,374 124,369.5 150,366.5 180,365.5 200,364.5 215,362.7 240,352 270,343 300,334 340,322 372,311.4 382,311.5 405,313.5 420,312 445,304.7 487,276.5 515,279.6 538,297.6 544,305.5 556,340 571.5,392.6 599.5,368.2 627.5,404.3 654.3,483.6 683.4,454.4 706.7,446.8 738.2,430 766.2,424.1 794.6,364.4 822,386.9 848.6,392 874,391 902.6,393.4 929,389.5 963.7,381.8 990,372.6 1020,370 1068.4,360.2 1112,355.6 1156,358.6 1176.8,361.3 1197.6,363 1208,362.3 1239.3,356 1276,349.8" fill="none" stroke="#000" stroke-width="1.100" clip-path="url(#cwr)"/>
<path d="M766.500 249V716" stroke="#2a1060" stroke-width="1"/>
</svg></div>
<div id="hscroll" class="abs scroll" style="left:0;top:731px;width:1276px;height:16px;">
<div class="btn" style="left:0;top:0;width:16px;height:16px"></div><svg style="left:5px;top:4px" width="4" height="7"><path d="M4 0L0 3.500L4 7z" fill="#000"/></svg>
<div class="btn" style="left:427px;top:0;width:8px;height:16px"></div>
<div class="btn" style="left:1260px;top:0;width:16px;height:16px"></div><svg style="left:1267px;top:4px" width="4" height="7"><path d="M0 0L4 3.500L0 7z" fill="#000"/></svg>
</div>
<div id="status" class="abs" style="left:0;top:747px;width:1276px;height:25px;background:#d4d0c8">
<div style="left:0;top:0;width:1276px;height:1px;background:#fff"></div>
<span class="t" style="left:-1px;top:5px;font-size:11px;letter-spacing:-0.300px">Ready</span>
<div class="sunk" style="left:929px;width:37px">18.595</div>
<div class="sunk" style="left:966px;width:37px">AVG</div>
<div class="sunk" style="left:1005px;width:55px">17581.95</div>
<div class="sunk" style="left:1063px;width:68px">-38.85281020</div>
<div class="sunk" style="left:1133px;width:76px">+146.16672558</div>
<div class="sunk" style="left:1211px;width:66px">05:28:01</div>
<div style="left:0;top:21px;width:1276px;height:1px;background:#fff"></div>
<div style="left:0;top:22px;width:50px;height:3px;background:#fff"></div>
<div style="left:50px;top:22px;width:1px;height:3px;background:#404040"></div>
<div style="left:65px;top:22px;width:160px;height:3px;background:#fff"></div>
<div style="left:227px;top:22px;width:161px;height:3px;background:#383838;border-top:1px solid #808080;box-sizing:border-box"></div>
<div style="left:388px;top:22px;width:2px;height:3px;background:#fff"></div>
<div style="left:955px;top:22px;width:2px;height:3px;background:#fff"></div>
<div style="left:957px;top:23px;width:319px;height:2px;background:#808080"></div>
</div>
</div></body></html>
